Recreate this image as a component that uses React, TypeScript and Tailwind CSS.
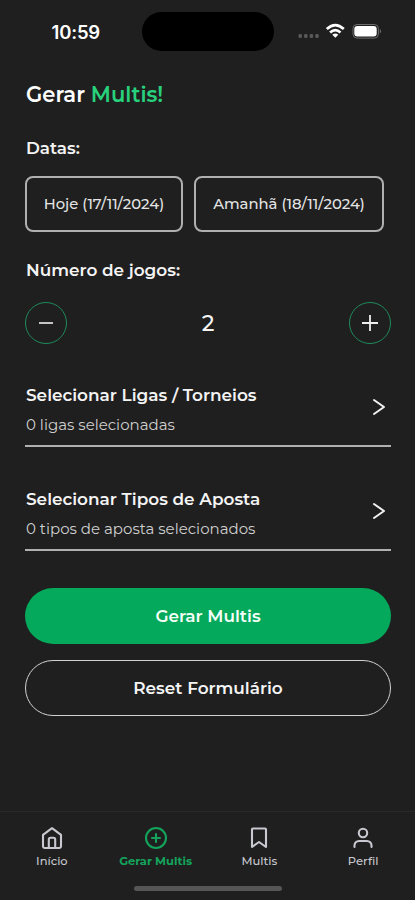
import type { ReactNode } from "react";

const line = "border-[#b0b0b0]";

function Chevron() {
  return (
    <svg className="mr-[5px] h-[18px] w-[14px]" viewBox="0 0 14 18" fill="none" stroke="#f2f2f2" strokeWidth="2" strokeLinecap="round" strokeLinejoin="round">
      <path d="M2 2 L12 9 L2 16" />
    </svg>
  );
}

function StatusBar() {
  return (
    <header className="flex h-[64px] shrink-0 items-start">
      <div className="flex w-[142px] justify-end pt-[20px] pr-[42px] font-['Inter',sans-serif] text-[18.5px] leading-[24px] font-semibold tracking-[-0.2px] text-white">10:59</div>
      <div className="mt-[12px] h-[39px] w-[132px] rounded-full bg-black" />
      <div className="mt-[23px] flex h-[16px] items-center pl-[24px]">
        <svg className="h-[16px] w-[86px]" viewBox="0 0 86 16" fill="none">
          <g fill="#59595b">
            <rect x="0.5" y="11" width="3.4" height="4" rx="1.2" />
            <rect x="6.1" y="11" width="3.4" height="4" rx="1.2" />
            <rect x="11.7" y="11" width="3.4" height="4" rx="1.2" />
            <rect x="17.3" y="11" width="3.4" height="4" rx="1.2" />
          </g>
          <g stroke="#fff" strokeWidth="2.7">
            <path d="M28.8 6.1 Q37.3 -2 45.8 6.1" />
            <path d="M32.1 9.4 Q37.3 4.7 42.5 9.4" />
          </g>
          <path d="M34.3 11.7 Q37.3 9.2 40.3 11.7 L37.3 14.8 Z" fill="#fff" />
          <rect x="55" y="1.5" width="25.4" height="13.6" rx="4" stroke="#6d6d6f" />
          <rect x="56.3" y="3" width="22.4" height="10.6" rx="3" fill="#fff" />
          <path d="M81.8 6 Q84.4 8.2 81.8 10.6 Z" fill="#6d6d6f" />
        </svg>
      </div>
    </header>
  );
}

function SelectRow({ title, detail }: { title: ReactNode; detail: ReactNode }) {
  return (
    <button className={`flex h-[68px] w-full items-center justify-between border-b-2 text-left ${line}`}>
      <span className="flex flex-col pb-[6px] pl-px">
        <span className="text-[16.9px] leading-[30px] font-semibold whitespace-nowrap text-[#f4f4f4]">{title}</span>
        <span className="text-[15px] leading-[29px] whitespace-nowrap text-[#cfcfcf]">{detail}</span>
      </span>
      <span className="pb-[10px]"><Chevron /></span>
    </button>
  );
}

function Tab({ label, active, children }: { label: ReactNode; active?: boolean; children: ReactNode }) {
  return (
    <button className={`flex flex-1 flex-col items-center pt-[14px] ${active ? "font-bold text-[#14a35c]" : "font-medium text-[#c8c8d0]"}`}>
      <svg className="h-[24px] w-[24px]" viewBox="0 0 24 24" fill="none" stroke="currentColor" strokeWidth="2.1" strokeLinecap="round" strokeLinejoin="round">
        {children}
      </svg>
      <span className="mt-[3px] text-[11.5px] leading-[16px] whitespace-nowrap">{label}</span>
    </button>
  );
}

export default function App() {
  return (
    <div className="flex h-[900px] w-[415px] flex-col overflow-hidden bg-[#1f1f1f] font-['Montserrat','Inter',sans-serif] text-[#f4f4f4]">
      <StatusBar />
      <main className="flex h-[747px] shrink-0 flex-col pr-[24px] pl-[25px]">
        <h1 className="mt-[15px] h-[32px] pl-px text-[21.1px] leading-[32px] font-semibold whitespace-nowrap text-white">
          Gerar <span className="text-[#28d17c]">Multis!</span>
        </h1>
        <h2 className="mt-[25px] h-[24px] pl-px text-[16.8px] leading-[24px] font-semibold">Datas:</h2>
        <div className="mt-[16px] flex gap-[11px]">
          <button className={`h-[56px] w-[158px] rounded-[8px] border-2 text-[14.75px] font-medium whitespace-nowrap text-[#e4e4e4] ${line}`}>Hoje (17/11/2024)</button>
          <button className={`h-[56px] w-[190px] rounded-[8px] border-2 text-[14.8px] font-medium whitespace-nowrap text-[#e4e4e4] ${line}`}>Amanhã (18/11/2024)</button>
        </div>
        <h2 className="mt-[26px] h-[24px] pl-px text-[16.9px] leading-[24px] font-semibold">Número de jogos:</h2>
        <div className="mt-[20px] flex h-[42px] items-center justify-between">
          <button className="flex h-[42px] w-[42px] items-center justify-center rounded-full border border-[#1f8a5b]">
            <svg className="h-[20px] w-[20px]" viewBox="0 0 20 20" stroke="#eee" strokeWidth="1.6"><path d="M3 10H17" /></svg>
          </button>
          <span className="pt-[2px] text-[22px] leading-[30px] font-medium">2</span>
          <button className="flex h-[42px] w-[42px] items-center justify-center rounded-full border border-[#1f8a5b]">
            <svg className="h-[20px] w-[20px]" viewBox="0 0 20 20" stroke="#eee" strokeWidth="1.8"><path d="M2 10H18M10 2V18" /></svg>
          </button>
        </div>
        <div className="mt-[35px]"><SelectRow title="Selecionar Ligas / Torneios" detail="0 ligas selecionadas" /></div>
        <div className="mt-[36px]"><SelectRow title="Selecionar Tipos de Aposta" detail="0 tipos de aposta selecionados" /></div>
        <button className="mt-[37px] h-[56px] shrink-0 rounded-full bg-[#04a95b] pt-[2px] text-[16.9px] font-semibold text-[#f4fff8]">Gerar Multis</button>
        <button className="mt-[16px] h-[56px] shrink-0 rounded-full border border-[#d2d2d2] pt-[2px] text-[16.9px] font-semibold">Reset Formulário</button>
      </main>
      <nav className="flex h-[75px] shrink-0 border-t border-[#29292b]">
        <Tab label="Início">
          <path d="M3 8.8 12 2.2 21 8.8V20.2a1.8 1.8 0 0 1-1.8 1.8H4.8A1.8 1.8 0 0 1 3 20.2Z" /><path d="M8.8 21.5V13.5Q8.8 11.8 10.5 11.8H13.5Q15.2 11.8 15.2 13.5V21.5" />
        </Tab>
        <Tab label="Gerar Multis" active>
          <circle cx="12" cy="12" r="10" /><path d="M12 8V16M8 12H16" />
        </Tab>
        <Tab label="Multis"><path d="M5 3.5Q5 2.5 6 2.5H18Q19 2.5 19 3.5V21L12 16 5 21Z" /></Tab>
        <Tab label="Perfil"><circle cx="12" cy="7" r="4.2" /><path d="M3.5 21V19.5A4.5 4.5 0 0 1 8 15H16A4.5 4.5 0 0 1 20.5 19.5V21" /></Tab>
      </nav>
      <div className="mx-auto h-[5px] w-[148px] shrink-0 rounded-full bg-[#565656]" />
    </div>
  );
}
